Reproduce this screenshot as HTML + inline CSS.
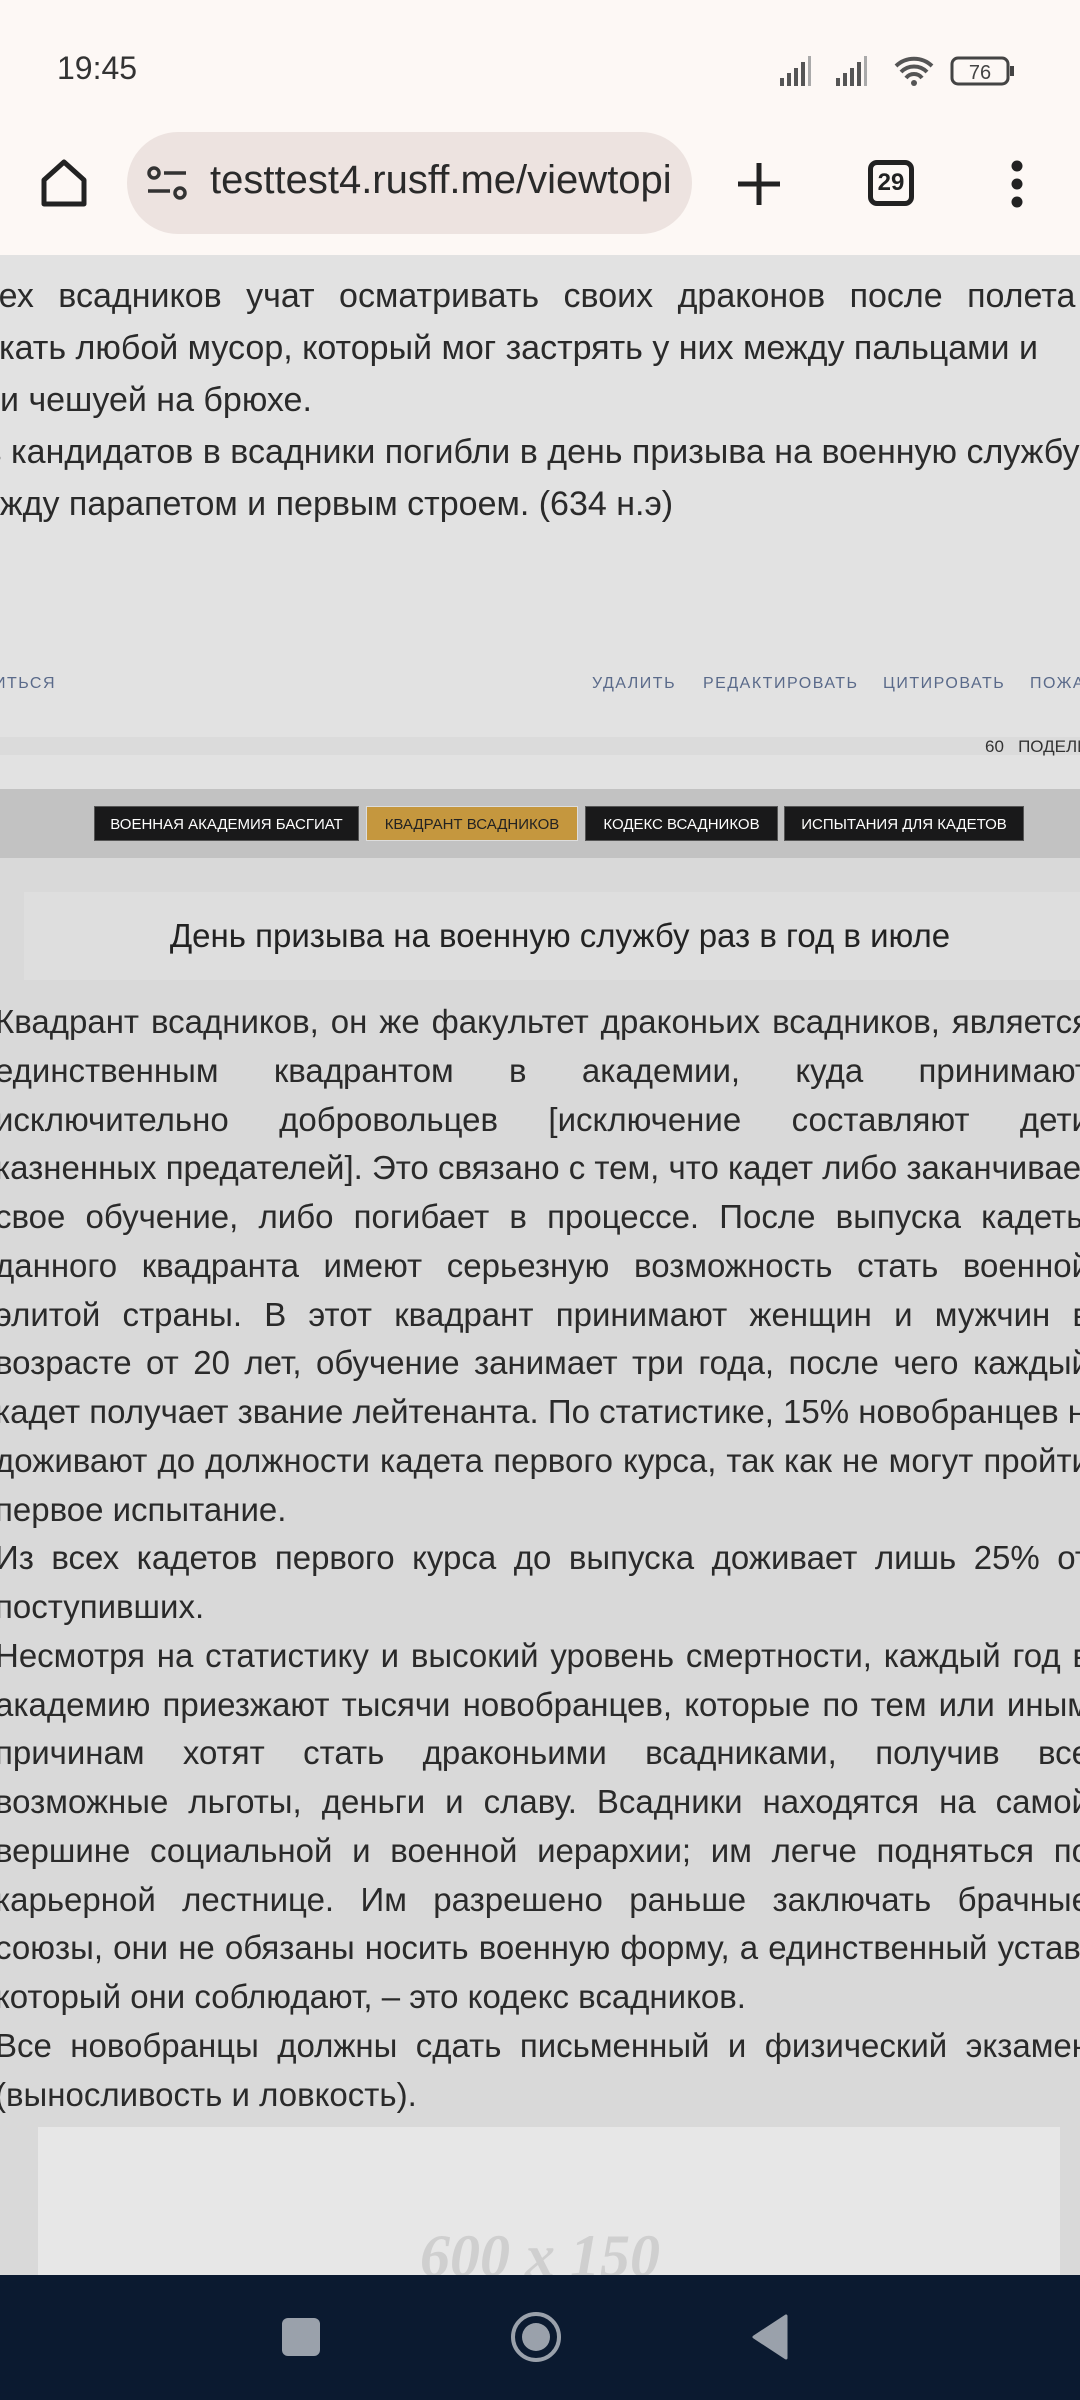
<!DOCTYPE html>
<html><head><meta charset="utf-8">
<style>
*{margin:0;padding:0;box-sizing:border-box}
html,body{width:1080px;height:2400px;overflow:hidden}
body{position:relative;background:#e2e2e2;font-family:"Liberation Sans",Arial,sans-serif;color:#222}
#w{position:absolute;left:0;top:0;width:1080px;height:2400px;overflow:hidden}
.abs{position:absolute}
.top{left:0;top:0;width:1080px;height:255px;background:#fdf8f5}
.ln{position:absolute;white-space:nowrap;font-size:34px;color:#2a2a2a}
.bl{position:absolute;left:-5px;width:1095px;font-size:33px;color:#2a2a2a;text-align:justify;text-align-last:justify;white-space:nowrap;height:42px;line-height:42px}
.bl.l{text-align-last:left}
.btn{position:absolute;top:806px;height:35px;background:#19191a;color:#fff;font-size:15px;line-height:35px;text-align:center;border:1px solid #555}
.act{position:absolute;top:675px;font-size:16px;color:#5a6a8a;letter-spacing:1.5px;white-space:nowrap}
</style></head><body><div id="w">
<div class="abs top"></div>
<div class="abs" style="left:57px;top:50px;font-size:32px;color:#333">19:45</div>
<svg class="abs" style="left:778px;top:54px" width="240" height="34" viewBox="0 0 240 34">
<g fill="#555"><rect x="2" y="24" width="4" height="8"/><rect x="9" y="19" width="4" height="13"/><rect x="16" y="14" width="4" height="18"/><rect x="23" y="8" width="4" height="24"/><rect x="30" y="2" width="3" height="30" fill="#aaa"/>
<rect x="58" y="24" width="4" height="8"/><rect x="65" y="19" width="4" height="13"/><rect x="72" y="14" width="4" height="18"/><rect x="79" y="8" width="4" height="24"/><rect x="86" y="2" width="3" height="30" fill="#aaa"/></g>
<path d="M118 12a26 26 0 0 1 36 0M123 18a18 18 0 0 1 26 0M128 24a10 10 0 0 1 16 0" stroke="#555" stroke-width="4" fill="none"/><circle cx="136" cy="29" r="3" fill="#555"/>
<rect x="174" y="4" width="56" height="26" rx="6" fill="none" stroke="#444" stroke-width="3"/><rect x="232" y="12" width="4" height="10" fill="#444"/>
<text x="202" y="25" font-size="20" text-anchor="middle" fill="#444" font-family="Liberation Sans">76</text></svg>
<svg class="abs" style="left:40px;top:158px" width="48" height="50" viewBox="0 0 48 50"><path d="M4 22L24 4L44 22V46H4Z" fill="none" stroke="#222" stroke-width="5" stroke-linejoin="round"/></svg>
<div class="abs" style="left:127px;top:132px;width:565px;height:102px;border-radius:51px;background:#ede3e0"></div>
<svg class="abs" style="left:146px;top:166px" width="44" height="36" viewBox="0 0 44 36"><circle cx="8" cy="7" r="5" fill="none" stroke="#333" stroke-width="3.5"/><path d="M18 7H40M2 25H24" stroke="#333" stroke-width="3.5"/><circle cx="34" cy="27" r="5" fill="none" stroke="#333" stroke-width="3.5"/></svg>
<div class="abs" style="left:210px;top:158px;width:462px;overflow:hidden;white-space:nowrap;font-size:40px;color:#2a2a2a">testtest4.rusff.me/viewtopic</div>
<svg class="abs" style="left:736px;top:161px" width="46" height="46"><path d="M23 2V44M2 23H44" stroke="#222" stroke-width="5"/></svg>
<div class="abs" style="left:868px;top:160px;width:46px;height:46px;border:5px solid #222;border-radius:9px;font-size:24px;font-weight:bold;line-height:36px;text-align:center">29</div>
<svg class="abs" style="left:1007px;top:160px" width="20" height="48"><circle cx="10" cy="6" r="5.5" fill="#222"/><circle cx="10" cy="24" r="5.5" fill="#222"/><circle cx="10" cy="42" r="5.5" fill="#222"/></svg>

<div class="ln" style="left:-36px;top:277px;word-spacing:15px">всех всадников учат осматривать своих драконов после полета</div>
<div class="ln" style="left:-20px;top:329px">икать любой мусор, который мог застрять у них между пальцами и</div>
<div class="ln" style="left:0px;top:381px">и чешуей на брюхе.</div>
<div class="ln" style="left:-14px;top:433px">з кандидатов в всадники погибли в день призыва на военную службу</div>
<div class="ln" style="left:-42px;top:485px">между парапетом и первым строем. (634 н.э)</div>

<div class="act" style="left:-18px">ЛИТЬСЯ</div>
<div class="act" style="left:592px">УДАЛИТЬ</div>
<div class="act" style="left:703px">РЕДАКТИРОВАТЬ</div>
<div class="act" style="left:883px">ЦИТИРОВАТЬ</div>
<div class="act" style="left:1030px">ПОЖАЛОВАТЬСЯ</div>
<div class="abs" style="left:0;top:737px;width:1080px;height:18px;background:#dbdbdb"></div>
<div class="abs" style="left:985px;top:737px;font-size:17px;color:#333;white-space:nowrap">60&nbsp;&nbsp; ПОДЕЛИТЬСЯ</div>

<div class="abs" style="left:0;top:789px;width:1080px;height:69px;background:#c2c2c2"></div>
<div class="btn" style="left:94px;width:265px">ВОЕННАЯ АКАДЕМИЯ БАСГИАТ</div>
<div class="btn" style="left:366px;width:212px;background:#c5973e;color:#222;border-color:#ddd">КВАДРАНТ ВСАДНИКОВ</div>
<div class="btn" style="left:585px;width:193px">КОДЕКС ВСАДНИКОВ</div>
<div class="btn" style="left:784px;width:240px">ИСПЫТАНИЯ ДЛЯ КАДЕТОВ</div>

<div class="abs" style="left:0;top:858px;width:1080px;height:1420px;background:#d9d9d9"></div>
<div class="abs" style="left:24px;top:892px;width:1056px;height:88px;background:#dedede"></div>
<div class="abs" style="left:20px;top:917px;width:1080px;text-align:center;font-size:33px;color:#222">День призыва на военную службу раз в год в июле</div>

<div class="bl" style="top:1001px">Квадрант всадников, он же факультет драконьих всадников, является</div>
<div class="bl" style="top:1050px">единственным квадрантом в академии, куда принимают</div>
<div class="bl" style="top:1099px">исключительно добровольцев [исключение составляют дети</div>
<div class="bl" style="top:1147px">казненных предателей]. Это связано с тем, что кадет либо заканчивает</div>
<div class="bl" style="top:1196px">свое обучение, либо погибает в процессе. После выпуска кадеты</div>
<div class="bl" style="top:1245px">данного квадранта имеют серьезную возможность стать военной</div>
<div class="bl" style="top:1294px">элитой страны. В этот квадрант принимают женщин и мужчин в</div>
<div class="bl" style="top:1342px">возрасте от 20 лет, обучение занимает три года, после чего каждый</div>
<div class="bl" style="top:1391px">кадет получает звание лейтенанта. По статистике, 15% новобранцев не</div>
<div class="bl" style="top:1440px">доживают до должности кадета первого курса, так как не могут пройти</div>
<div class="bl l" style="top:1489px">первое испытание.</div>
<div class="bl" style="top:1537px">Из всех кадетов первого курса до выпуска доживает лишь 25% от</div>
<div class="bl l" style="top:1586px">поступивших.</div>
<div class="bl" style="top:1635px">Несмотря на статистику и высокий уровень смертности, каждый год в</div>
<div class="bl" style="top:1684px">академию приезжают тысячи новобранцев, которые по тем или иным</div>
<div class="bl" style="top:1732px">причинам хотят стать драконьими всадниками, получив все</div>
<div class="bl" style="top:1781px">возможные льготы, деньги и славу. Всадники находятся на самой</div>
<div class="bl" style="top:1830px">вершине социальной и военной иерархии; им легче подняться по</div>
<div class="bl" style="top:1879px">карьерной лестнице. Им разрешено раньше заключать брачные</div>
<div class="bl" style="top:1927px">союзы, они не обязаны носить военную форму, а единственный устав,</div>
<div class="bl l" style="top:1976px">который они соблюдают, – это кодекс всадников.</div>
<div class="bl" style="top:2025px">Все новобранцы должны сдать письменный и физический экзамен</div>
<div class="bl l" style="top:2074px">(выносливость и ловкость).</div>

<div class="abs" style="left:38px;top:2127px;width:1022px;height:160px;background:#e7e7e7"></div>
<div class="abs" style="left:0;top:2222px;width:1080px;text-align:center;font-family:'Liberation Serif',serif;font-style:italic;font-weight:bold;font-size:60px;color:#cfcfcf">600 x 150</div>

<div class="abs" style="left:0;top:2275px;width:1080px;height:125px;background:#0b1a30"></div>
<div class="abs" style="left:282px;top:2318px;width:38px;height:38px;border-radius:6px;background:#9aa1ab"></div>
<svg class="abs" style="left:509px;top:2310px" width="54" height="54"><circle cx="27" cy="27" r="23" fill="none" stroke="#9aa1ab" stroke-width="4"/><circle cx="27" cy="27" r="14" fill="#9aa1ab"/></svg>
<svg class="abs" style="left:750px;top:2314px" width="40" height="46"><path d="M36 2V44L4 23Z" fill="#9aa1ab" stroke="#9aa1ab" stroke-width="3" stroke-linejoin="round"/></svg>
</div></body></html>
